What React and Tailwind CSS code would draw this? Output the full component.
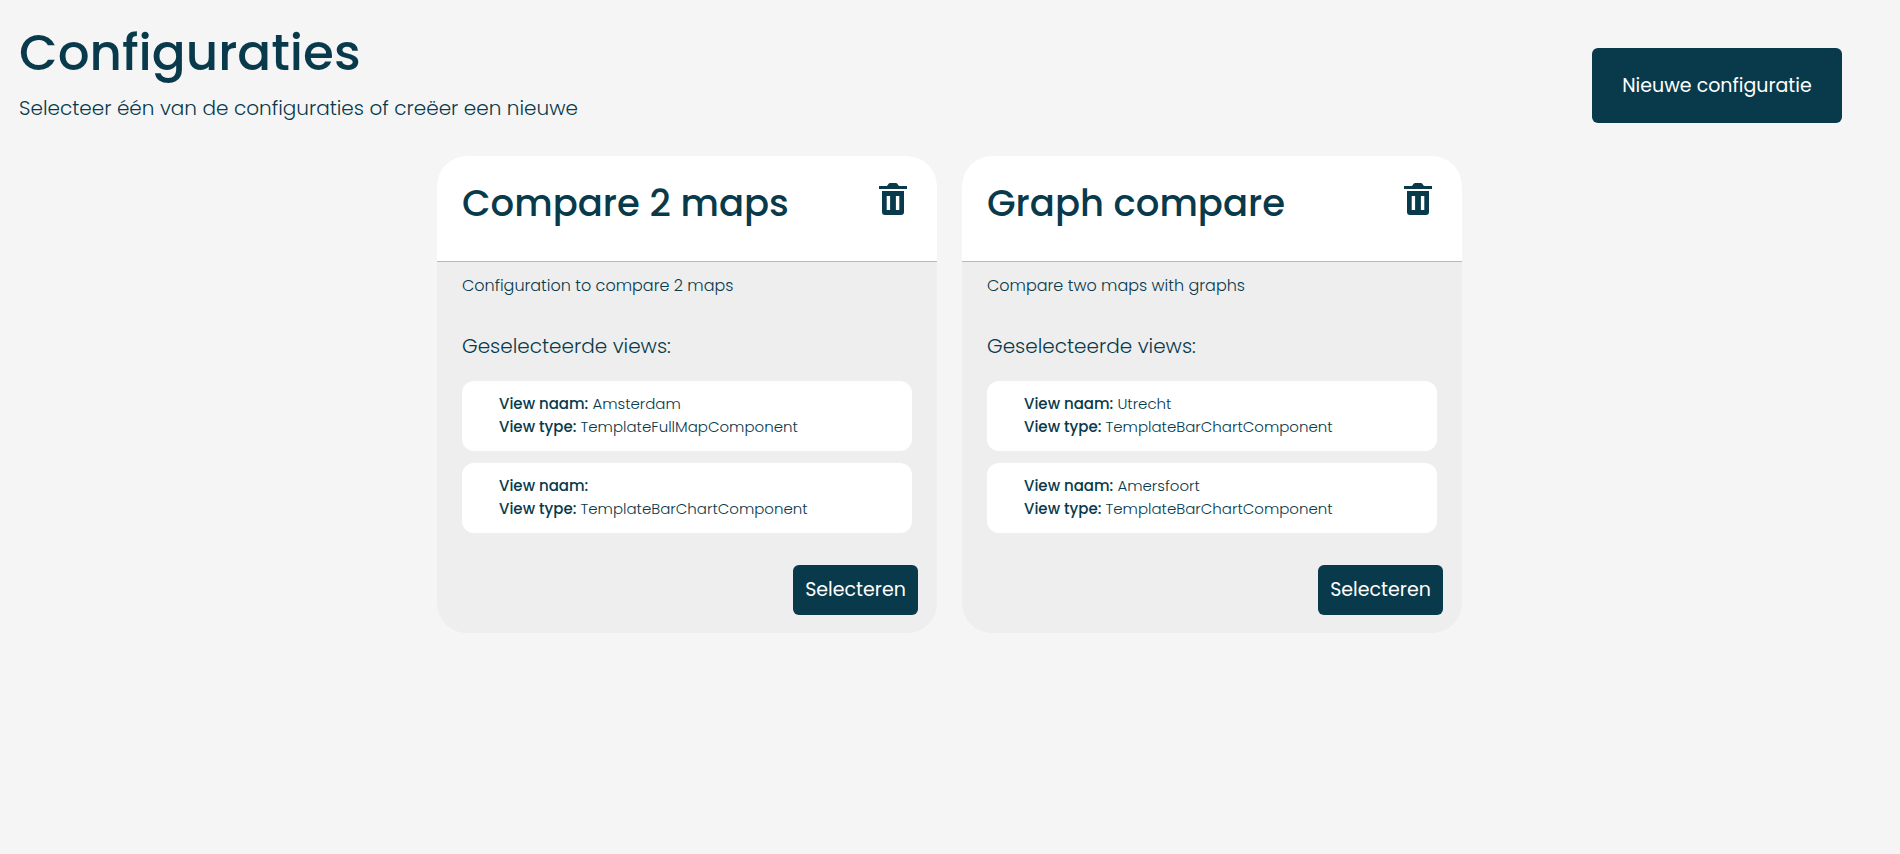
const configurations = [
  {
    title: "Compare 2 maps",
    description: "Configuration to compare 2 maps",
    views: [
      { name: "Amsterdam", type: "TemplateFullMapComponent" },
      { name: "", type: "TemplateBarChartComponent" },
    ],
  },
  {
    title: "Graph compare",
    description: "Compare two maps with graphs",
    views: [
      { name: "Utrecht", type: "TemplateBarChartComponent" },
      { name: "Amersfoort", type: "TemplateBarChartComponent" },
    ],
  },
];

function TrashIcon() {
  return (
    <svg viewBox="0 0 28 32" className="h-8 w-7" fill="currentColor" aria-hidden="true">
      <path d="M0 3h7.5c1.6 0 1.6-3 3.5-3h6c1.9 0 1.9 3 3.5 3H28v3H0z" />
      <path
        fillRule="evenodd"
        d="M3 8h22v21a3 3 0 0 1-3 3H6a3 3 0 0 1-3-3zM7.700 13V27h3.400V13zM16.900 13V27h3.400V13z"
      />
    </svg>
  );
}

function ViewItem({ view }) {
  return (
    <li className="rounded-xl bg-white pt-[11px] pr-6 pb-[13px] pl-[37px] text-[15px] leading-[23px]">
      <p>
        <strong className="font-medium">View naam:</strong> {view.name}
      </p>
      <p>
        <strong className="font-medium">View type:</strong> {view.type}
      </p>
    </li>
  );
}

function ConfigurationCard({ configuration }) {
  return (
    <article className="w-full max-w-[500px] overflow-hidden rounded-[30px] bg-[#eeeeee]">
      <header className="flex items-start justify-between border-b border-[#b8b8b8] bg-white pt-[22px] pr-[30px] pb-8 pl-[25px]">
        <h2 className="text-[37px] leading-[51px] font-medium">{configuration.title}</h2>
        <button type="button" aria-label="Verwijderen" className="mt-[5px] cursor-pointer">
          <TrashIcon />
        </button>
      </header>
      <div className="px-[25px] pt-3">
        <p className="text-base leading-6">{configuration.description}</p>
        <h3 className="mt-9 text-xl leading-6">Geselecteerde views:</h3>
        <ul className="mt-[23px] flex flex-col gap-3">
          {configuration.views.map((view, index) => (
            <ViewItem key={index} view={view} />
          ))}
        </ul>
      </div>
      <footer className="flex justify-end pt-8 pr-[19px] pb-[18px]">
        <button
          type="button"
          className="h-[50px] w-[125px] cursor-pointer rounded-md bg-[#083a4b] text-[19px] leading-7 font-normal text-white"
        >
          Selecteren
        </button>
      </footer>
    </article>
  );
}

export default function App() {
  return (
    <main className="min-h-screen bg-[#f5f5f5] font-['Poppins','Inter',sans-serif] font-light text-[#083a4b]">
      <header className="flex items-start justify-between pt-6 pr-[58px] pl-[19px]">
        <div>
          <h1 className="text-[50px] leading-[58px] font-medium">Configuraties</h1>
          <p className="mt-3 text-xl leading-7">
            Selecteer één van de configuraties of creëer een nieuwe
          </p>
        </div>
        <button
          type="button"
          className="mt-6 h-[75px] w-[250px] cursor-pointer rounded-md bg-[#083a4b] text-[19px] leading-7 font-normal text-white"
        >
          Nieuwe configuratie
        </button>
      </header>
      <section className="mt-[33px] flex flex-wrap justify-center gap-[25px] pr-px">
        {configurations.map((configuration) => (
          <ConfigurationCard key={configuration.title} configuration={configuration} />
        ))}
      </section>
    </main>
  );
}
